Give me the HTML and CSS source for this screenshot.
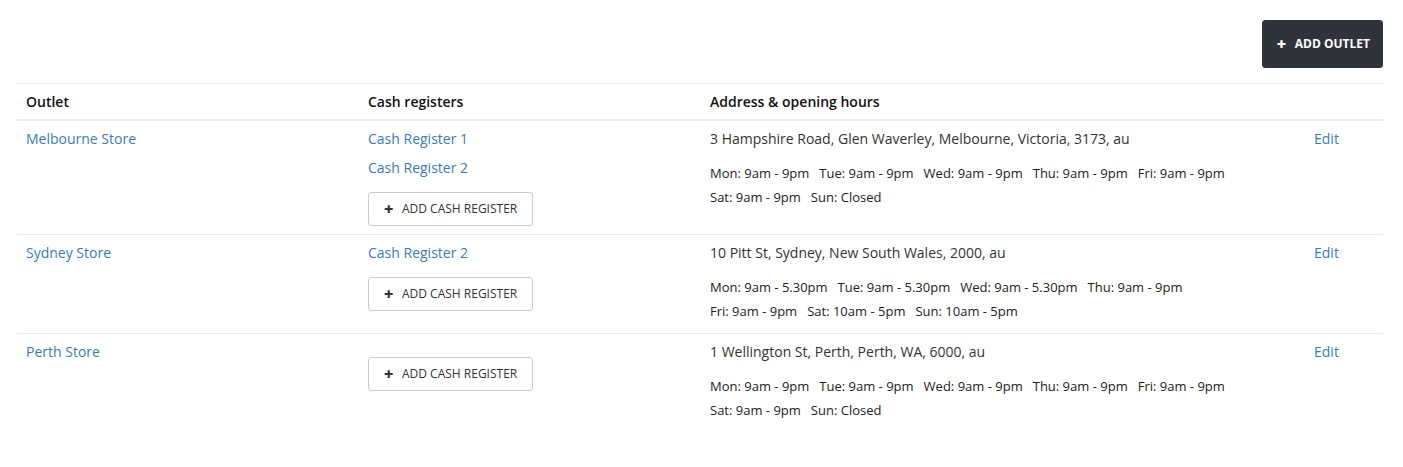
FILE: index.html
```html
<!DOCTYPE html>
<html>
<head>
<meta charset="utf-8">
<link rel="stylesheet" href="styles.css">
</head>
<body>
<div class="page">
  <div class="toolbar">
    <button class="btn btn-dark"><span class="plus">+</span>ADD OUTLET</button>
  </div>
  <table class="outlets">
    <colgroup>
      <col class="c-outlet"><col class="c-cash"><col class="c-addr"><col class="c-edit">
    </colgroup>
    <thead>
      <tr><th>Outlet</th><th>Cash registers</th><th>Address &amp; opening hours</th><th></th></tr>
    </thead>
    <tbody>
      <tr>
        <td><a class="link">Melbourne Store</a></td>
        <td>
          <div class="regs"><a class="link">Cash Register 1</a><a class="link">Cash Register 2</a></div>
          <button class="btn btn-light"><span class="plus">+</span>ADD CASH REGISTER</button>
        </td>
        <td>
          <div class="addr">3 Hampshire Road, Glen Waverley, Melbourne, Victoria, 3173, au</div>
          <div class="hours"><span>Mon: 9am - 9pm</span><span>Tue: 9am - 9pm</span><span>Wed: 9am - 9pm</span><span>Thu: 9am - 9pm</span><span>Fri: 9am - 9pm</span><span>Sat: 9am - 9pm</span><span>Sun: Closed</span></div>
        </td>
        <td><a class="link">Edit</a></td>
      </tr>
      <tr>
        <td><a class="link">Sydney Store</a></td>
        <td>
          <div class="regs"><a class="link">Cash Register 2</a></div>
          <button class="btn btn-light"><span class="plus">+</span>ADD CASH REGISTER</button>
        </td>
        <td>
          <div class="addr">10 Pitt St, Sydney, New South Wales, 2000, au</div>
          <div class="hours"><span>Mon: 9am - 5.30pm</span><span>Tue: 9am - 5.30pm</span><span>Wed: 9am - 5.30pm</span><span>Thu: 9am - 9pm</span><span>Fri: 9am - 9pm</span><span>Sat: 10am - 5pm</span><span>Sun: 10am - 5pm</span></div>
        </td>
        <td><a class="link">Edit</a></td>
      </tr>
      <tr>
        <td><a class="link">Perth Store</a></td>
        <td>
          <div class="regs"></div>
          <button class="btn btn-light"><span class="plus">+</span>ADD CASH REGISTER</button>
        </td>
        <td>
          <div class="addr">1 Wellington St, Perth, Perth, WA, 6000, au</div>
          <div class="hours"><span>Mon: 9am - 9pm</span><span>Tue: 9am - 9pm</span><span>Wed: 9am - 9pm</span><span>Thu: 9am - 9pm</span><span>Fri: 9am - 9pm</span><span>Sat: 9am - 9pm</span><span>Sun: Closed</span></div>
        </td>
        <td><a class="link">Edit</a></td>
      </tr>
    </tbody>
  </table>
</div>
</body>
</html>
```

FILE: styles.css
```css
html, body {
  margin: 0;
  padding: 0;
  background: #fff;
}
body {
  font-family: "Open Sans", "Liberation Sans", sans-serif;
  font-size: 14px;
  line-height: 20px;
  color: #333;
}
.page {
  padding: 20px 20px 0 17px;
}
.toolbar {
  display: flex;
  justify-content: flex-end;
  margin-bottom: 15px;
}
.btn {
  font-family: "Open Sans", "Liberation Sans", sans-serif;
  font-size: 12px;
  line-height: 16px;
  border-radius: 3px;
  cursor: pointer;
  display: inline-flex;
  align-items: center;
}
.plus {
  font-weight: 800;
  font-size: 16px;
  margin-right: 9px;
  display: inline-block;
  width: 9px;
}
.btn-dark {
  background: #2f343b;
  color: #fff;
  border: 1px solid #2f343b;
  font-weight: 700;
  height: 48px;
  padding: 0 12px 0 14px;
}
.btn-light {
  background: #fff;
  color: #333;
  border: 1px solid #ccc;
  height: 34px;
  padding: 0 15px 0 15px;
  margin-top: 14px;
}
.outlets {
  width: 100%;
  border-collapse: collapse;
  table-layout: fixed;
}
.c-outlet { width: 342px; }
.c-cash { width: 342px; }
.c-addr { width: 604px; }
.c-edit { width: 78px; }
.outlets th {
  text-align: left;
  font-weight: 600;
  color: #111;
  padding: 8px 9px 7px;
  border-top: 1px solid #e7ecf1;
  border-bottom: 2px solid #e7ecf1;
}
.outlets td {
  vertical-align: top;
  padding: 8px 9px 8px;
  border-top: 1px solid #e7ecf1;
}
.outlets tbody tr:first-child td {
  border-top: none;
}
.link {
  color: #3a7bbb;
  text-decoration: none;
}
.regs {
  display: flex;
  flex-direction: column;
  gap: 9px;
}
.regs:empty {
  display: none;
}
.regs:empty + .btn-light {
  margin-top: 15px;
}
.addr {
  color: #333;
}
.hours {
  margin-top: 12px;
  margin-bottom: 2px;
  font-size: 13px;
  line-height: 24px;
  color: #222;
  max-width: 530px;
}
.hours span {
  margin-right: 10px;
  white-space: nowrap;
  display: inline-block;
}
```
